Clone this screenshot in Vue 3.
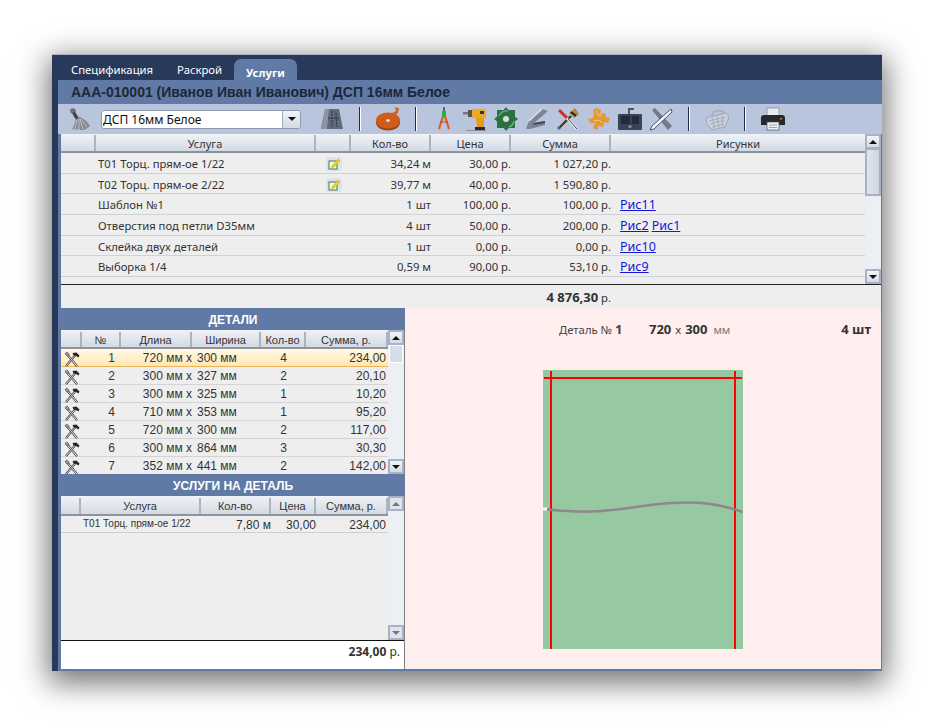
<template>
  <div class="page">
    <svg class="defs" width="0" height="0">
      <symbol id="row-tools" viewBox="0 0 16 16">
        <path d="M12.5 14.5 L4 4.5" stroke="#444" stroke-width="2.2" stroke-linecap="round" />
        <path d="M12.5 14.5 L4 4.5" stroke="#f6f6f6" stroke-width="1" stroke-linecap="round" />
        <path d="M1 3 L3 5 L5 4.5 L5 3 L3 1 A3 3 0 0 0 1 3 Z" fill="#999" stroke="#333" stroke-width="0.5" />
        <path d="M2.5 14.5 L11 4.5" stroke="#444" stroke-width="2.1" stroke-linecap="round" />
        <path d="M2.5 14.5 L11 4.5" stroke="#e6e6e6" stroke-width="0.9" stroke-linecap="round" />
        <path d="M8.5 2 L12.5 1.5 L15.5 4.5 L14.5 6.5 L12 5 L9.5 4.5 Z" fill="#2a2a2a" />
      </symbol>
      <symbol id="row-edit" viewBox="0 0 16 14">
        <rect x="0" y="0" width="16" height="14" rx="3" fill="#dde3e8" />
        <rect x="3" y="4" width="8" height="8" fill="#f4f7ec" stroke="#3f7a3f" />
        <path d="M6 9 L12 2 L14 4 L8 10 L5.5 10.5 Z" fill="#f2d21e" stroke="#b89a10" stroke-width="0.5" />
      </symbol>
    </svg>

    <div class="window">
      <div class="tabs">
        <span v-for="tab in tabs" :key="tab" class="tab" :class="{ 'tab--active': tab === 'Услуги' }">{{ tab }}</span>
      </div>

      <div class="frame">
        <h1 class="title">ААА-010001 (Иванов Иван Иванович) ДСП 16мм Белое</h1>

        <div class="toolbar">
          <svg class="broom" viewBox="0 0 22 28">
            <circle cx="5" cy="6" r="2.8" fill="#6a7074" />
            <path d="M4 8 L7 7 L11 13 L8 15 Z" fill="#3f4448" />
            <path d="M8 14 L12 12 C16 14 20 17 22 21 C20 23 17 25 14 25 L4 24 C6 21 7 18 8 14 Z" fill="#858b90" />
            <path d="M9 15 L7 24 M11 14 L11 25 M12 14 L15 24 M13 14 L19 22" stroke="#c8cdd2" stroke-width="0.8" />
          </svg>
          <div class="combo">
            <span class="combo__text">ДСП 16мм Белое</span>
            <span class="combo__btn"><i class="arrow arrow--down" /></span>
          </div>

          <div class="tb-group tb-group--first">
            <svg class="tool" viewBox="0 0 24 24">
              <path d="M5 2 L19 2 L23 22 L1 22 Z" fill="#5f6b7c" />
              <path d="M5 2 L9 2 L7 22 L1 22 Z" fill="#8a94a2" />
              <path d="M12 4 L12 20 M16 6 L17 20 M8 11 L19 11" stroke="#2a3240" stroke-width="1" stroke-dasharray="2 1" />
            </svg>
          </div>
          <span class="tb-sep" />
          <div class="tb-group">
            <svg class="tool" viewBox="0 0 24 24">
              <path d="M14 7 L20 4 L19 0 L23 1 L22 6 L16 11 Z" fill="#d8602a" />
              <ellipse cx="12" cy="15.5" rx="12" ry="8" fill="#9c4212" />
              <ellipse cx="12" cy="13.5" rx="12" ry="8" fill="#d05c1c" />
              <ellipse cx="12" cy="13.5" rx="2" ry="1.3" fill="#efe7dc" />
            </svg>
          </div>
          <span class="tb-sep" />
          <div class="tb-group">
            <svg class="tool" viewBox="0 0 24 24">
              <path d="M12 6 L7 22" stroke="#ef5a14" stroke-width="2.2" />
              <path d="M12 6 L17 22" stroke="#ef5a14" stroke-width="2.2" />
              <rect x="10" y="4" width="4" height="6" fill="#2fa84a" />
              <rect x="11.2" y="0" width="1.6" height="4" fill="#2b5f38" />
              <path d="M8 15 L16 15" stroke="#555" stroke-width="0.8" />
            </svg>
            <svg class="tool" viewBox="0 0 24 24">
              <rect x="0" y="5" width="6" height="2.5" fill="#777" />
              <rect x="5" y="3" width="5" height="7" fill="#555" />
              <rect x="9" y="2" width="14" height="9" rx="2" fill="#eeaa22" />
              <rect x="17" y="4" width="4" height="3" fill="#333" />
              <path d="M13 11 L21 11 L21 20 L14 20 Z" fill="#e89a14" />
              <rect x="12" y="20" width="10" height="3" fill="#2a2a2a" />
              <path d="M3 23.5 L23 23.5" stroke="#8c8f94" stroke-width="1" />
            </svg>
            <svg class="tool" viewBox="0 0 24 24">
              <circle cx="12" cy="12" r="9.5" fill="#2c7040" />
              <path d="M12 0 L15 4 L9 4 Z M12 24 L15 20 L9 20 Z M0 12 L4 9 L4 15 Z M24 12 L20 9 L20 15 Z M3 3 L9 3 L3 9 Z M21 3 L21 9 L15 3 Z M3 21 L3 15 L9 21 Z M21 21 L15 21 L21 15 Z" fill="#2c7040" />
              <circle cx="12" cy="12" r="3" fill="#d7dde2" />
              <path d="M5 9 A8 8 0 0 1 14 4 M15 20 A8 8 0 0 0 20 14" stroke="#66b07e" stroke-width="1.4" fill="none" />
            </svg>
            <svg class="tool" viewBox="0 0 24 24">
              <path d="M1 22 L4 14 L17 2 L23 4 L9 16 L20 14 L20 18 L5 22 Z" fill="#7a8494" />
              <path d="M4 14 L17 2" stroke="#dfe4ea" stroke-width="1.2" />
              <path d="M9 16 L20 14 L20 16 L8 18 Z" fill="#3f4856" />
            </svg>
            <svg class="tool" viewBox="0 0 24 24">
              <path d="M3 21 L15 9" stroke="#4a3a1e" stroke-width="2.4" />
              <path d="M13 6 L19 1 L23 7 L18 11 Z" fill="#b58a3c" />
              <path d="M15 5 L20 9" stroke="#222" stroke-width="2" />
              <path d="M3 3 L21 22" stroke="#f4f4f4" stroke-width="2.2" />
              <path d="M3 3 L11 11" stroke="#d8262a" stroke-width="3" />
              <path d="M12 12 L21 22" stroke="#333" stroke-width="0.9" />
              <circle cx="3" cy="21" r="1.6" fill="#3a62b0" />
            </svg>
            <svg class="tool" viewBox="0 0 24 24">
              <path d="M9 1 L14 3 L13 7 L18 6 L19 10 L23 11 L21 16 L17 15 L16 20 L11 19 L11 23 L6 21 L8 16 L3 16 L1 12 L6 11 L7 7 L6 3 Z" fill="#e49a32" />
              <path d="M9 4 L11 8 L15 9 M7 14 L12 13 L15 16" stroke="#f6c884" stroke-width="1" fill="none" />
            </svg>
            <svg class="tool" viewBox="0 0 24 24">
              <rect x="0" y="7" width="24" height="16" rx="1" fill="#3a4354" />
              <rect x="3" y="9" width="9" height="8" fill="#232a38" />
              <rect x="14" y="9" width="7" height="8" fill="#232a38" />
              <path d="M11 7 L11 2 L16 2" stroke="#4d5668" stroke-width="2" fill="none" />
              <circle cx="12" cy="19.5" r="1.6" fill="#8a93a3" />
            </svg>
            <svg class="tool" viewBox="0 0 24 24">
              <path d="M3 3 L6 1 L23 19 L19 23 Z" fill="#6f7a8a" />
              <path d="M22 2 L3 19 L1 23 L5 22 L23 5 Z" fill="#f5f7fa" stroke="#3a4454" stroke-width="0.9" />
            </svg>
          </div>
          <span class="tb-sep" />
          <div class="tb-group">
            <svg class="tool tool--faded" viewBox="0 0 24 24">
              <path d="M7 9 C7 3 17 2 19 6" stroke="#98a0ab" stroke-width="1.2" fill="none" />
              <path d="M1 11 L21 6 L24 10 L20 20 L7 23 L2 17 Z" fill="#cfd4db" stroke="#98a0ab" />
              <path d="M4 14 L21 10 M5 17 L20 13 M7 20 L19 17 M7 11 L10 22 M12 10 L14 21 M17 8 L18 19" stroke="#98a0ab" stroke-width="0.8" />
            </svg>
          </div>
          <span class="tb-sep" />
          <div class="tb-group">
            <svg class="tool" viewBox="0 0 24 24">
              <rect x="6" y="1" width="12" height="8" fill="#e8ecf0" stroke="#7e8690" stroke-width="0.7" />
              <path d="M3 8 L21 8 Q24 8 24 11 L24 18 L0 18 L0 11 Q0 8 3 8 Z" fill="#25282c" />
              <rect x="19" y="11" width="2" height="1.4" fill="#e8862a" />
              <rect x="6" y="15" width="12" height="8" fill="#eef1f4" stroke="#555" stroke-width="0.7" />
              <path d="M8 18 L16 18 M8 20.5 L16 20.5" stroke="#8e949b" stroke-width="0.8" />
            </svg>
          </div>
        </div>

        <section class="services">
          <div class="services__main">
            <div class="services__grid services__head">
              <span class="th" />
              <span class="th">Услуга</span>
              <span class="th" />
              <span class="th">Кол-во</span>
              <span class="th">Цена</span>
              <span class="th">Сумма</span>
              <span class="th th--last">Рисунки</span>
            </div>
            <div v-for="s in services" :key="s.name" class="services__grid services__row">
              <span />
              <span class="services__name">{{ s.name }}</span>
              <span class="services__edit">
                <svg v-if="s.editable" width="16" height="14"><use href="#row-edit" /></svg>
              </span>
              <span class="num">{{ s.qty }}</span>
              <span class="num">{{ s.price }}</span>
              <span class="num">{{ s.sum }}</span>
              <span class="services__links">
                <a v-for="p in s.pics" :key="p" href="#">{{ p }}</a>
              </span>
            </div>
          </div>
          <div class="scroll">
            <span class="scroll__btn"><i class="arrow arrow--up" /></span>
            <span class="scroll__thumb scroll__thumb--top" />
            <span class="scroll__rest" />
            <span class="scroll__btn"><i class="arrow arrow--down" /></span>
          </div>
        </section>

        <div class="grand-total"><b>4 876,30</b>&nbsp;р.</div>

        <div class="split">
          <div class="left">
            <h2 class="band">ДЕТАЛИ</h2>
            <section class="sub sub--details">
              <div class="sub__main">
                <div class="details__grid sub__head">
                  <span class="th" />
                  <span class="th">№</span>
                  <span class="th">Длина</span>
                  <span class="th">Ширина</span>
                  <span class="th">Кол-во</span>
                  <span class="th">Сумма, р.</span>
                </div>
                <div
                  v-for="(d, i) in details"
                  :key="i"
                  class="details__grid details__row"
                  :class="{ 'details__row--active': i === 0 }"
                >
                  <span class="details__icon"><svg width="16" height="16"><use href="#row-tools" /></svg></span>
                  <span class="details__no">{{ i + 1 }}</span>
                  <span class="num">{{ d.len }} мм x</span>
                  <span class="details__width">{{ d.width }} мм</span>
                  <span class="details__qty">{{ d.qty }}</span>
                  <span class="num">{{ d.sum }}</span>
                </div>
              </div>
              <div class="scroll scroll--small">
                <span class="scroll__btn"><i class="arrow arrow--up" /></span>
                <span class="scroll__thumb scroll__thumb--small" />
                <span class="scroll__rest" />
                <span class="scroll__btn"><i class="arrow arrow--down" /></span>
              </div>
            </section>

            <h2 class="band">УСЛУГИ НА ДЕТАЛЬ</h2>
            <section class="sub sub--services">
              <div class="sub__main">
                <div class="part__grid sub__head sub__head--tall">
                  <span class="th" />
                  <span class="th">Услуга</span>
                  <span class="th">Кол-во</span>
                  <span class="th">Цена</span>
                  <span class="th">Сумма, р.</span>
                </div>
                <div class="part__grid part__row">
                  <span />
                  <span class="part__name">Т01 Торц. прям-ое 1/22</span>
                  <span class="num">7,80 м</span>
                  <span class="num">30,00</span>
                  <span class="num">234,00</span>
                </div>
              </div>
              <div class="scroll scroll--small scroll--disabled">
                <span class="scroll__btn"><i class="arrow arrow--up" /></span>
                <span class="scroll__rest" />
                <span class="scroll__btn"><i class="arrow arrow--down" /></span>
              </div>
            </section>
            <div class="part-total"><b>234,00</b>&nbsp;р.</div>
          </div>

          <div class="right">
            <div class="right__info">
              <span class="right__no">Деталь № <b>1</b></span>
              <span class="right__size"><b>720</b> x <b>300</b> <small>мм</small></span>
              <b class="right__count">4 шт</b>
            </div>
            <svg class="sheet" width="200" height="279" viewBox="0 0 200 279">
              <rect width="200" height="279" fill="#96c8a2" />
              <path d="M1 8 H199" stroke="#ff0000" stroke-width="2" />
              <path d="M8 1 V279 M192 1 V279" stroke="#ff0000" stroke-width="2" />
              <path d="M0 139 H4" stroke="#fbf6f2" stroke-width="3" />
              <path
                d="M4 139.5 C20 141 34 142 48 141.5 C70 141 90 137 112 134.5 C135 132 160 132 176 135.5 C186 137.5 194 140 200 142"
                stroke="#8f7f88"
                stroke-width="2.6"
                fill="none"
                opacity="0.9"
              />
            </svg>
          </div>
        </div>
      </div>
    </div>
  </div>
</template>

<script setup>
const tabs = ['Спецификация', 'Раскрой', 'Услуги'];

const services = [
  { name: 'Т01 Торц. прям-ое 1/22', editable: true, qty: '34,24 м', price: '30,00 р.', sum: '1 027,20 р.', pics: [] },
  { name: 'Т02 Торц. прям-ое 2/22', editable: true, qty: '39,77 м', price: '40,00 р.', sum: '1 590,80 р.', pics: [] },
  { name: 'Шаблон №1', qty: '1 шт', price: '100,00 р.', sum: '100,00 р.', pics: ['Рис11'] },
  { name: 'Отверстия под петли D35мм', qty: '4 шт', price: '50,00 р.', sum: '200,00 р.', pics: ['Рис2', 'Рис1'] },
  { name: 'Склейка двух деталей', qty: '1 шт', price: '0,00 р.', sum: '0,00 р.', pics: ['Рис10'] },
  { name: 'Выборка 1/4', qty: '0,59 м', price: '90,00 р.', sum: '53,10 р.', pics: ['Рис9'] }
];

const details = [
  { len: 720, width: 300, qty: 4, sum: '234,00' },
  { len: 300, width: 327, qty: 2, sum: '20,10' },
  { len: 300, width: 325, qty: 1, sum: '10,20' },
  { len: 710, width: 353, qty: 1, sum: '95,20' },
  { len: 720, width: 300, qty: 2, sum: '117,00' },
  { len: 300, width: 864, qty: 3, sum: '30,30' },
  { len: 352, width: 441, qty: 2, sum: '142,00' }
];
</script>

<style>
html,
body {
  background: #fff;
}
</style>

<style scoped>
.page {
  width: 934px;
  height: 724px;
  box-sizing: border-box;
  padding: 54px 52px 53px;
  overflow: hidden;
  font-family: "Noto Sans", sans-serif;
  font-size: 11.3px;
  color: #333;
}

.defs {
  position: absolute;
}

.window {
  height: 617px;
  display: flex;
  flex-direction: column;
  background: #29395a;
  border-top: 1px solid #a9b4c6;
  box-sizing: border-box;
  box-shadow: 0 8px 28px 4px rgba(0, 0, 0, 0.55);
}

.tabs {
  height: 25px;
  display: flex;
  align-items: flex-end;
  padding-left: 7px;
}

.tab {
  padding: 0 12px;
  height: 21px;
  line-height: 22px;
  color: #fff;
}

.tab--active {
  background: #617aa5;
  border-radius: 7px 7px 0 0;
  font-weight: 700;
  line-height: 27px;
}

.frame {
  flex: 1;
  min-height: 0;
  margin-left: 6px;
  background: #617aa5;
  padding: 0 1px 2px 3px;
  display: flex;
  flex-direction: column;
}

.title {
  margin: 0 0 0 -3px;
  height: 24px;
  line-height: 24px;
  padding-left: 13px;
  font-family: "Liberation Sans", sans-serif;
  font-size: 14px;
  font-weight: 700;
  color: #1b2738;
}

.toolbar {
  height: 30px;
  margin-left: -3px;
  margin-right: -1px;
  padding-left: 10px;
  background: #b9c5dd;
  display: flex;
  align-items: center;
}

.broom {
  width: 22px;
  height: 28px;
  flex: none;
}

.combo {
  width: 200px;
  height: 19px;
  margin-left: 11px;
  box-sizing: border-box;
  border: 1px solid #8d99ad;
  border-radius: 3px;
  background: #fff;
  display: flex;
  align-items: stretch;
  flex: none;
  color: #111;
  font-size: 12px;
}

.combo__text {
  flex: 1;
  line-height: 18px;
  padding-left: 1px;
}

.combo__btn {
  width: 17px;
  border-left: 1px solid #a5aebd;
  background: linear-gradient(#f2f4f7, #d3dae5);
  display: flex;
  align-items: center;
  justify-content: center;
  border-radius: 0 2px 2px 0;
}

.tb-group {
  display: flex;
  gap: 7px;
}

.tb-group--first {
  margin-left: 19px;
}

.tool {
  width: 24px;
  height: 24px;
  flex: none;
}

.tool--faded {
  opacity: 0.8;
}

.tb-sep {
  width: 2px;
  height: 24px;
  margin: 0 15px;
  background: linear-gradient(90deg, #1e2b42 50%, #fff 50%);
  flex: none;
}

.arrow {
  display: block;
  width: 0;
  height: 0;
  border-left: 4px solid transparent;
  border-right: 4px solid transparent;
}

.arrow--up {
  border-bottom: 4px solid #111;
}

.arrow--down {
  border-top: 4px solid #111;
}

.th {
  display: flex;
  align-items: center;
  justify-content: center;
  border-right: 2px solid #aeb3ba;
  box-sizing: border-box;
  min-width: 0;
  white-space: nowrap;
}

.th--last {
  border-right: 0;
}

.num {
  text-align: right;
  white-space: nowrap;
}

.services {
  height: 150px;
  display: flex;
  background: #eee;
  overflow: hidden;
  flex: none;
}

.services__main {
  flex: 1;
  min-width: 0;
}

.services__grid {
  display: grid;
  grid-template-columns: 35px 220px 35px 80px 80px 100px 1fr;
}

.services__head {
  height: 19px;
  box-sizing: border-box;
  background: linear-gradient(#f0f3f7, #d3dae4);
  border-bottom: 2px solid #8e949c;
  padding-top: 1px;
  font-size: 11px;
}

.services__row {
  height: 20.7px;
  box-sizing: border-box;
  border-bottom: 1px solid #cfd2d4;
  line-height: 22px;
}

.services__name {
  padding-left: 2px;
  white-space: nowrap;
}

.services__edit {
  display: flex;
  align-items: center;
  padding-left: 10px;
}

.services__links {
  padding-left: 9px;
  display: flex;
  gap: 3px;
  font-size: 12.5px;
}

.services__links a {
  color: #1414dc;
  text-decoration: underline;
}

.scroll {
  width: 16px;
  flex: none;
  display: flex;
  flex-direction: column;
  background: #eceff4;
  box-sizing: border-box;
}

.scroll__btn {
  height: 15px;
  flex: none;
  background: linear-gradient(#f2f4f7, #d5dbe5);
  border: 2px solid #a7b2c6;
  box-sizing: border-box;
  display: flex;
  align-items: center;
  justify-content: center;
}

.scroll__thumb {
  flex: none;
  background: linear-gradient(90deg, #dfe5ee, #cdd6e2);
  box-sizing: border-box;
}

.scroll__thumb--top {
  height: 47px;
  border: 2px solid #a7b2c6;
  border-top: 1px solid #a7b2c6;
}

.scroll__thumb--small {
  height: 18px;
  margin: 0 1px;
  background: #d5dde9;
  border: 1px solid #fff;
}

.scroll__rest {
  flex: 1;
}

.scroll--disabled .scroll__btn {
  background: #dfe4ec;
}

.scroll--disabled .arrow--up {
  border-bottom-color: #777;
}

.scroll--disabled .arrow--down {
  border-top-color: #777;
}

.grand-total {
  height: 24px;
  box-sizing: border-box;
  background: #eee;
  border-top: 1px solid #222;
  padding-right: 270px;
  text-align: right;
  line-height: 24px;
  flex: none;
}

.grand-total b {
  font-size: 13px;
}

.split {
  flex: 1;
  min-height: 0;
  display: flex;
}

.left {
  width: 344px;
  flex: none;
  box-sizing: border-box;
  border-right: 1px solid #808080;
  display: flex;
  flex-direction: column;
  font-family: "Liberation Sans", sans-serif;
  font-size: 12px;
}

.band {
  margin: 0 -1px 0 -3px;
  height: 22px;
  line-height: 24px;
  flex: none;
  background: #617aa5;
  color: #fff;
  text-align: center;
  font-size: 12px;
  font-weight: 700;
  padding-left: 3px;
}

.sub {
  display: flex;
  background: #eee;
  overflow: hidden;
}

.sub--details {
  height: 144px;
  flex: none;
}

.sub--services {
  flex: 1;
  min-height: 0;
  border-bottom: 1px solid #111;
}

.sub__main {
  flex: 1;
  min-width: 0;
}

.sub__head {
  height: 19px;
  box-sizing: border-box;
  background: linear-gradient(#f0f3f7, #d3dae4);
  border-bottom: 2px solid #8e949c;
  font-size: 11px;
  padding-top: 2px;
}

.sub__head--tall {
  height: 20px;
}

.details__grid {
  display: grid;
  grid-template-columns: 21px 39px 71px 69px 45px 82px;
}

.details__row {
  height: 18px;
  box-sizing: border-box;
  border-bottom: 1px solid #d4d4d4;
  line-height: 19px;
}

.details__row--active {
  background: linear-gradient(#fff9e6, #ffe7b4);
  border-bottom: 1px solid #eab45a;
}

.details__icon {
  display: flex;
  align-items: center;
  padding-left: 3px;
}

.details__no {
  text-align: right;
  padding-right: 6px;
}

.details__width {
  padding-left: 5px;
  white-space: nowrap;
}

.details__qty {
  text-align: center;
}

.details__row .num:last-child,
.part__row .num:last-child {
  padding-right: 2px;
}

.part__grid {
  display: grid;
  grid-template-columns: 20px 120px 70px 45px 72px;
}

.part__row {
  height: 17px;
  box-sizing: border-box;
  border-bottom: 1px solid #cfcfcf;
  line-height: 19px;
}

.part__name {
  font-size: 10px;
  padding-left: 2px;
  white-space: nowrap;
  line-height: 16px;
}

.part-total {
  height: 28px;
  flex: none;
  background: #fff;
  text-align: right;
  line-height: 22px;
  padding-right: 4px;
  font-family: "Noto Sans", sans-serif;
}

.part-total b {
  font-size: 12px;
}

.right {
  flex: 1;
  min-width: 0;
  background: #ffeeee;
  display: flex;
  flex-direction: column;
  align-items: center;
}

.right__info {
  align-self: stretch;
  height: 62px;
  flex: none;
  box-sizing: border-box;
  padding: 14px 10px 0 154px;
  display: flex;
  line-height: 15px;
}

.right__info b {
  font-size: 13px;
}

.right__no {
  width: 90px;
  color: #444;
}

.right__size {
  word-spacing: 1px;
}

.right__size small {
  font-size: 11px;
  color: #777;
  margin-left: 2px;
}

.right__count {
  margin-left: auto;
}

.sheet {
  flex: none;
}
</style>
